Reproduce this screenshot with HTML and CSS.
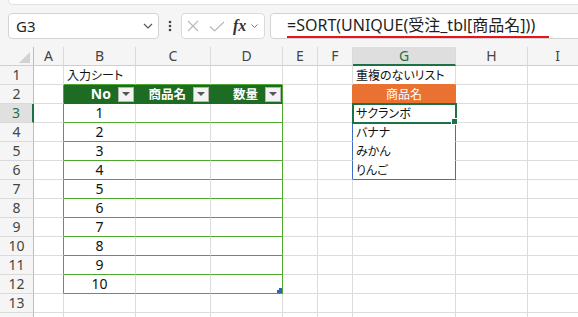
FILE: index.html
```html
<!DOCTYPE html>
<html lang="ja">

<head>
    <meta charset="UTF-8">
    <meta name="viewport" content="width=device-width, initial-scale=1.0">
    <title>Book1 - Excel</title>
    <link rel="stylesheet" href="styles.css">
</head>

<body>

    <div class="ribbon-edge"></div>

    <div class="formula-bar">
        <div class="name-box">
            <span>G3</span>
            <svg class="chev" width="10" height="6" viewBox="0 0 10 6"><path d="M1 1l4 4 4-4" fill="none" stroke="#555" stroke-width="1.2"/></svg>
        </div>
        <div class="kebab">
            <svg width="4" height="12" viewBox="0 0 4 12"><circle cx="2" cy="2" r="1.3" fill="#444"/><circle cx="2" cy="6" r="1.3" fill="#444"/><circle cx="2" cy="10" r="1.3" fill="#444"/></svg>
        </div>
        <div class="fx-box">
            <svg class="cancel" width="12" height="12" viewBox="0 0 12 12"><path d="M1 1l10 10M11 1L1 11" stroke="#b8b8b8" stroke-width="1.1"/></svg>
            <svg class="enter" width="16" height="11" viewBox="0 0 16 11"><path d="M1 5.5l4.5 4.5L15 1" fill="none" stroke="#b8b8b8" stroke-width="1.1"/></svg>
            <span class="fx">fx</span>
            <svg class="chev-sm" width="7" height="4" viewBox="0 0 7 4"><path d="M0.5 0.5l3 3 3-3" fill="none" stroke="#777" stroke-width="1"/></svg>
        </div>
        <div class="formula-input">
            <span class="formula">=SORT(UNIQUE(受注_tbl[商品名]))</span>
        </div>
    </div>

    <table class="sheet">
        <colgroup>
            <col style="width:34px"><col style="width:30px"><col style="width:72px"><col style="width:75px"><col style="width:72px">
            <col style="width:35px"><col style="width:35px"><col style="width:103px"><col style="width:72px"><col style="width:60px">
        </colgroup>
        <tr class="col-heads">
            <th class="corner"></th><th>A</th><th>B</th><th>C</th><th>D</th><th>E</th><th>F</th><th class="cur">G</th><th>H</th><th>I</th>
        </tr>
        <tr>
            <th class="rh">1</th><td></td><td class="jp t-top">入力シート</td><td class="t-top"></td><td class="t-top"></td><td></td><td></td><td class="jp o-bot">重複のないリスト</td><td></td><td></td>
        </tr>
        <tr>
            <th class="rh">2</th><td class="t-left"></td>
            <td class="t-head"><div class="fh"><b>No</b><i class="filter"></i></div></td>
            <td class="t-head"><div class="fh"><b class="jp">商品名</b><i class="filter"></i></div></td>
            <td class="t-head t-right"><div class="fh"><b class="jp">数量</b><i class="filter"></i></div></td>
            <td></td><td class="o-right"></td><td class="jp orange">商品名</td><td></td><td></td>
        </tr>
        <tr>
            <th class="rh cur">3</th><td class="t-left"></td><td class="t-body num">1</td><td class="t-body"></td><td class="t-body t-right"></td><td></td><td class="s-right"></td><td class="jp spill sel">サクランボ</td><td></td><td></td>
        </tr>
        <tr>
            <th class="rh">4</th><td class="t-left"></td><td class="t-body num">2</td><td class="t-body"></td><td class="t-body t-right"></td><td></td><td class="s-right"></td><td class="jp spill">バナナ</td><td></td><td></td>
        </tr>
        <tr>
            <th class="rh">5</th><td class="t-left"></td><td class="t-body num">3</td><td class="t-body"></td><td class="t-body t-right"></td><td></td><td class="s-right"></td><td class="jp spill">みかん</td><td></td><td></td>
        </tr>
        <tr>
            <th class="rh">6</th><td class="t-left"></td><td class="t-body num">4</td><td class="t-body"></td><td class="t-body t-right"></td><td></td><td class="s-right"></td><td class="jp spill spill-end">りんご</td><td></td><td></td>
        </tr>
        <tr>
            <th class="rh">7</th><td class="t-left"></td><td class="t-body num">5</td><td class="t-body"></td><td class="t-body t-right"></td><td></td><td></td><td></td><td></td><td></td>
        </tr>
        <tr>
            <th class="rh">8</th><td class="t-left"></td><td class="t-body num">6</td><td class="t-body"></td><td class="t-body t-right"></td><td></td><td></td><td></td><td></td><td></td>
        </tr>
        <tr>
            <th class="rh">9</th><td class="t-left"></td><td class="t-body num">7</td><td class="t-body"></td><td class="t-body t-right"></td><td></td><td></td><td></td><td></td><td></td>
        </tr>
        <tr>
            <th class="rh">10</th><td class="t-left"></td><td class="t-body num">8</td><td class="t-body"></td><td class="t-body t-right"></td><td></td><td></td><td></td><td></td><td></td>
        </tr>
        <tr>
            <th class="rh">11</th><td class="t-left"></td><td class="t-body num">9</td><td class="t-body"></td><td class="t-body t-right"></td><td></td><td></td><td></td><td></td><td></td>
        </tr>
        <tr>
            <th class="rh">12</th><td class="t-left"></td><td class="t-body num">10</td><td class="t-body"></td><td class="t-body t-right t-end"></td><td></td><td></td><td></td><td></td><td></td>
        </tr>
        <tr>
            <th class="rh">13</th><td></td><td></td><td></td><td></td><td></td><td></td><td></td><td></td><td></td>
        </tr>
        <tr>
            <th class="rh"></th><td></td><td></td><td></td><td></td><td></td><td></td><td></td><td></td><td></td>
        </tr>
    </table>

</body>

</html>
```

FILE: styles.css
```css
body {
    margin: 0;
    background-color: #f5f5f5;
    font-family: "Noto Sans", "Noto Sans CJK JP", sans-serif;
    color: #222;
    overflow: hidden;
}

/* top edge of the ribbon panel */
.ribbon-edge {
    height: 5px;
    margin-left: 8px;
    background-color: #fff;
    border: 1px solid #e2e2e2;
    border-top: none;
    border-right: none;
    border-radius: 0 0 0 7px;
    box-sizing: border-box;
}

.formula-bar {
    display: flex;
    align-items: center;
    height: 26px;
    padding: 8px 0 0 8px;
    margin-bottom: 8px;
}

.name-box {
    display: flex;
    align-items: center;
    justify-content: space-between;
    width: 151px;
    height: 26px;
    box-sizing: border-box;
    padding: 0 5px 0 7px;
    background-color: #fff;
    border: 1px solid #d3d3d3;
    border-radius: 4px;
    font-size: 15px;
    color: #1f1f1f;
}

.kebab {
    display: flex;
    justify-content: center;
    width: 22px;
}

.fx-box {
    display: flex;
    align-items: center;
    width: 84px;
    height: 26px;
    box-sizing: border-box;
    padding-left: 5px;
    background-color: #fff;
    border: 1px solid #dadada;
    border-radius: 4px;
}

.fx-box .enter {
    margin-left: 10px;
}

.fx {
    margin-left: 8px;
    font-family: "Liberation Serif", serif;
    font-style: italic;
    font-weight: bold;
    font-size: 16px;
    color: #333;
    line-height: 1;
}

.fx-box .chev-sm {
    margin-left: 5px;
}

.formula-input {
    flex: 1;
    height: 26px;
    box-sizing: border-box;
    margin: 0 -10px 0 5px;
    padding-left: 16px;
    background-color: #fff;
    border: 1px solid #d3d3d3;
    border-radius: 4px;
    display: flex;
    align-items: flex-start;
}

.formula {
    display: inline-block;
    margin-top: 1px;
    padding-right: 14px;
    font-size: 16px;
    line-height: 21px;
    color: #1f1f1f;
    border-bottom: 2px solid #e8141b;
    white-space: nowrap;
}

/* worksheet grid */
.sheet {
    border-collapse: separate;
    border-spacing: 0;
    table-layout: fixed;
    width: 588px;
    font-size: 14px;
}

.sheet tr {
    height: 19px;
}

.sheet th,
.sheet td {
    height: 19px;
    padding: 0 3px;
    line-height: 16px;
    white-space: nowrap;
    overflow: hidden;
    box-sizing: border-box;
}

.sheet td {
    background-color: #fff;
    border-right: 1px solid #dcdcdc;
    border-bottom: 1px solid #dcdcdc;
    color: #111;
}

.col-heads th {
    background-color: #f5f5f5;
    font-weight: normal;
    color: #444;
    border-right: 1px solid #dadada;
    border-bottom: 1px solid #cfcfcf;
    text-align: center;
}

.col-heads th.cur {
    background-color: #dedede;
    color: #1e7145;
    border-bottom: 2px solid #1e7145;
}

.corner {
    position: relative;
    border-right: 1px solid #bdbdbd !important;
}

.corner::after {
    content: "";
    position: absolute;
    right: 3px;
    bottom: 2px;
    width: 11px;
    height: 11px;
    background-color: #d2d2d2;
    clip-path: polygon(100% 0, 100% 100%, 0 100%);
}

.rh {
    background-color: #f5f5f5;
    font-weight: normal;
    color: #444;
    border-right: 1px solid #bdbdbd;
    border-bottom: 1px solid #dadada;
    text-align: center;
}

.rh.cur {
    background-color: #e0e0e0;
    color: #1e7145;
    border-right: 2px solid #1e7145;
}

.jp {
    font-family: "Noto Sans CJK JP", sans-serif;
    font-size: 12px;
    font-feature-settings: "palt" 1;
}

.num {
    text-align: center;
}

/* input table B2:D12 */
.t-top {
    border-bottom-color: #4ea72e !important;
}

.t-left {
    border-right-color: #4ea72e !important;
}

.t-head {
    background-color: #1e6b24 !important;
    border-right-color: #1e6b24 !important;
    border-bottom-color: #1e6b24 !important;
    padding: 0 1px 0 0 !important;
}

.t-body {
    border-bottom-color: #4ea72e !important;
}

.t-right {
    border-right-color: #4ea72e !important;
}

.t-end {
    position: relative;
}

.t-end::after {
    content: "";
    position: absolute;
    right: 0;
    bottom: 0;
    width: 5px;
    height: 5px;
    background-color: #2f62b8;
    clip-path: polygon(100% 0, 100% 100%, 0 100%, 0 40%, 40% 40%, 40% 0);
}

.fh {
    display: flex;
    align-items: center;
    justify-content: flex-end;
    gap: 7px;
    color: #fff;
}

.fh b {
    font-size: 14px;
}

.fh b.jp {
    font-size: 12.5px;
}

.filter {
    display: flex;
    align-items: center;
    justify-content: center;
    width: 16px;
    height: 15px;
    box-sizing: border-box;
    background-color: #f3f3f3;
    border: 1px solid #b5b5b5;
}

.filter::after {
    content: "";
    border-left: 4px solid transparent;
    border-right: 4px solid transparent;
    border-top: 4px solid #555;
}

/* result list in G */
.o-bot {
    border-bottom-color: #e97132 !important;
}

.o-right {
    border-right-color: #e97132 !important;
}

.orange {
    background-color: #e97132 !important;
    border-right-color: #e97132 !important;
    border-bottom-color: #e97132 !important;
    color: #fff !important;
    text-align: center;
}

.s-right {
    border-right-color: #3e6fc1 !important;
}

.spill {
    border-right-color: #3e6fc1 !important;
    border-bottom-color: #fff !important;
}

.spill-end {
    border-bottom-color: #3e6fc1 !important;
}

.sel {
    position: relative;
    overflow: visible !important;
    outline: 2px solid #1e7145;
    outline-offset: -1px;
}

.sel::after {
    content: "";
    position: absolute;
    right: -3px;
    bottom: -3px;
    width: 5px;
    height: 5px;
    background-color: #1e7145;
    border: 1px solid #fff;
}
```
